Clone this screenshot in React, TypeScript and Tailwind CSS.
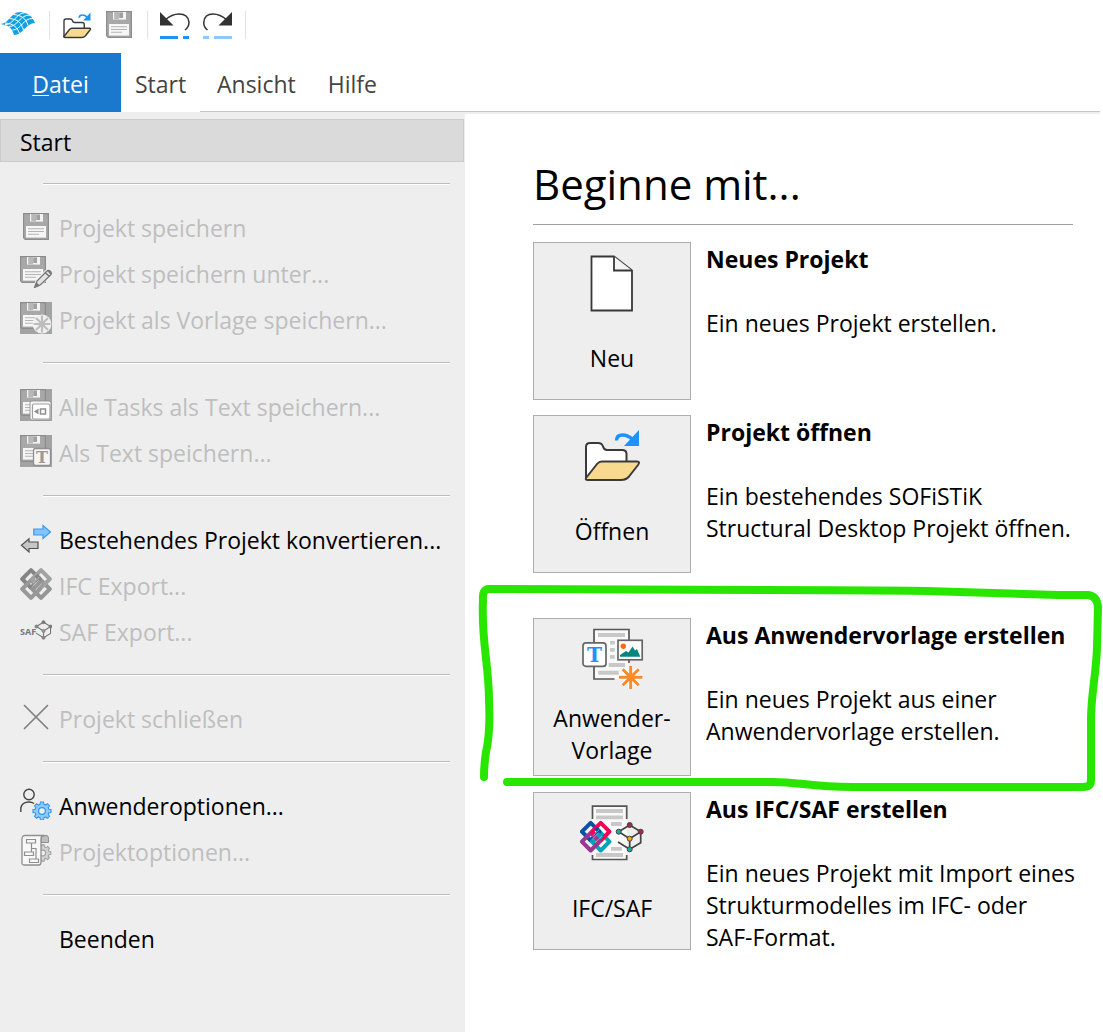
import { Fragment, type ReactNode } from 'react';

type IconProps = { children: ReactNode; viewBox?: string; className?: string };

function Icon({ children, viewBox = '0 0 32 32', className = 'size-8' }: IconProps) {
  return (
    <svg viewBox={viewBox} className={`shrink-0 ${className}`} fill="none" aria-hidden="true">
      {children}
    </svg>
  );
}

function Floppy() {
  return (
    <g>
      <path d="M.6 .6H25.4V26.4H2.2L.6 24.8Z" fill="#a8a8a8" stroke="#8c8c8c" strokeWidth="1.2" />
      <path d="M7 1H20V8.6H7Z" fill="#f4f4f4" />
      <path d="M8.2 1H13V8.4H8.2Z" fill="#b8b8b8" />
      <path d="M13.2 1.4H17V7H13.2Z" fill="#a0a0a0" />
      <path d="M3 13H23V24.6H3Z" fill="#f6f6f6" />
      <path d="M5 15.7H21M5 18.5H21M5 21.3H16" stroke="#b4b4b4" strokeWidth="1.1" />
    </g>
  );
}

function FloppyIcon() {
  return (
    <Icon>
      <g transform="translate(3 3)"><Floppy /></g>
    </Icon>
  );
}

function SaveAsIcon() {
  return (
    <Icon>
      <Floppy />
      <path d="M14.5 31 16.5 24.5 26 15Q28.500 12.500 31 15Q33 17.500 30 20L21 28.500Z" fill="#eee" stroke="#eee" strokeWidth="2" />
      <path d="M15 31 17 25 26.500 15.500Q28.500 13.500 30.500 15.500Q32.500 17.500 29.800 19.800L20.500 28.800Z" fill="#e4e4e4" stroke="#777" strokeWidth="1.300" />
      <path d="M25 16.500 29.500 20.500M28 14.500 31 18M15 31 16.500 27.500 18.500 29.500Z" fill="#777" stroke="#777" strokeWidth="1.600" />
    </Icon>
  );
}

function SaveTemplateIcon() {
  return (
    <Icon>
      <path d="M0 0H32V32H0Z" fill="#a3a3a3" />
      <Floppy />
      <circle cx="22" cy="22" r="9.400" fill="#f1f1f1" />
      <path d="M22 13.500V30.500M13.500 22H30.500M16 16 28 28M28 16 16 28" stroke="#bdbdbd" strokeWidth="2.200" />
    </Icon>
  );
}

function SaveTasksIcon() {
  return (
    <Icon>
      <path d="M0 0H32V32H0Z" fill="#a3a3a3" />
      <Floppy />
      <rect x="10" y="12" width="21" height="19" rx="2" fill="#f5f5f5" stroke="#8c8c8c" strokeWidth="0.800" />
      <rect x="12.500" y="15" width="17.500" height="15" rx="1.500" fill="#fff" stroke="#a0a0a0" strokeWidth="1.200" />
      <path d="M14 22.500 18.500 19.500V25.500Z" fill="#909090" />
      <rect x="20.500" y="20" width="5" height="5" stroke="#909090" strokeWidth="1.500" />
    </Icon>
  );
}

function SaveTextIcon() {
  return (
    <Icon>
      <path d="M0 0H32V32H0Z" fill="#a3a3a3" />
      <Floppy />
      <rect x="13.500" y="13.500" width="17" height="17" rx="2" fill="#f5f5f5" stroke="#909090" strokeWidth="1.300" />
      <text x="22" y="28" textAnchor="middle" fontSize="16" fontWeight="700" fontFamily="DejaVu Serif, serif" fill="#9a9a9a">T</text>
    </Icon>
  );
}

function ConvertIcon() {
  return (
    <Icon>
      <path d="M13.800 7H23V3.500L30.500 10 23 16.500V13H13.800Z" fill="#83c4fb" stroke="#3898ee" strokeWidth="1.200" />
      <path d="M18 20H9V16.700L1.400 23.300 9 30V26.500H18Z" fill="#c6c6c6" stroke="#505050" strokeWidth="1.200" />
    </Icon>
  );
}

type IfcColors = { a: string; b: string; c: string; d: string };

function IfcMark({ a, b, c, d }: IfcColors) {
  return (
    <g strokeWidth="4" strokeLinejoin="round">
      <path d="M10.700 20.900 19.500 29.700 10.700 38.500 1.900 29.700Z" stroke={a} />
      <path d="M20.700 30.900 29.500 39.700 20.700 48.500 11.900 39.700Z" stroke={d} />
      <path d="M10.700 30.900 19.500 39.700 10.700 48.500 1.900 39.700Z" stroke={c} />
      <path d="M20.700 20.900 29.500 29.700 20.700 38.500 11.900 29.700Z" stroke={b} />
      <path d="M15.700 25.900 19.500 29.700 12.500 36.700" stroke={a} />
      <path d="M12.500 40.500 18.700 32.900 22 36.200" stroke={d} />
      <path d="M13.200 33.400 19.500 39.700 15.700 43.500" stroke={c} />
      <path d="M13 33.800 19.200 27.600M12.200 37.200 18.400 31M15.400 40.400 21.800 34" stroke="#fff" strokeWidth="0.600" opacity="0.700" />
    </g>
  );
}

function GraphMark({ colors, line }: { colors: string[]; line: string }) {
  return (
    <g>
      <path d="M38.700 29.700 49.700 23 60.700 29.700 49.700 36.700ZM49.700 36.700V47.300L60.700 40.700V29.700M49.700 47.300 38 40" stroke={line} strokeWidth="1.700" />
      <circle cx="49.700" cy="23" r="2.500" fill={colors[0]} stroke={line} />
      <circle cx="60.700" cy="29.700" r="2.500" fill={colors[0]} stroke={line} />
      <circle cx="38.700" cy="29.700" r="2.500" fill={colors[1]} stroke={line} />
      <circle cx="49.700" cy="47.300" r="2.500" fill={colors[1]} stroke={line} />
      <circle cx="49.700" cy="36.700" r="2.500" fill={colors[2]} stroke={line} />
    </g>
  );
}

function IfcExportIcon() {
  return (
    <Icon viewBox="-0.300 18.700 32 32">
      <IfcMark a="#858585" b="#a2a2a2" c="#999" d="#959595" />
    </Icon>
  );
}

function SafExportIcon() {
  return (
    <Icon>
      <text x="0" y="21" fontSize="9" fontWeight="700" fontFamily="Open Sans, sans-serif" fill="#777">SAF</text>
      <g transform="translate(-8.300 -6.500) scale(.64)">
        <GraphMark colors={['#777', '#888', '#999']} line="#777" />
      </g>
    </Icon>
  );
}

function CloseIcon() {
  return (
    <Icon>
      <path d="M4.500 4.500 27.500 27.500M27.500 4.500 4.500 27.500" stroke="#808080" strokeWidth="1.700" strokeLinecap="round" />
    </Icon>
  );
}

const gearPath =
  'M-1.500-9H1.500L2-6.700 3.700-6 5.500-7.300 7.500-5.300 6.200-3.500 6.900-1.800 9-1.500V1.500L6.900 1.800 6.200 3.500 7.500 5.300 5.500 7.300 3.700 6 2 6.700 1.500 9H-1.500L-2 6.700-3.700 6-5.500 7.300-7.500 5.300-6.200 3.500-6.900 1.800-9 1.500V-1.500L-6.900-1.800-6.200-3.500-7.500-5.300-5.500-7.300-3.700-6-2-6.700Z';

function UserOptionsIcon() {
  return (
    <Icon>
      <circle cx="9" cy="6.500" r="5.200" stroke="#444" strokeWidth="1.400" />
      <path d="M.8 24V20Q2 14 9 14Q12 14 14 15.500" stroke="#444" strokeWidth="1.400" />
      <g transform="translate(22 23)">
        <path d={gearPath} fill="#8ccaff" stroke="#2f96f3" strokeWidth="1.100" />
        <circle r="3.400" fill="#eee" stroke="#2f96f3" strokeWidth="1.200" />
      </g>
    </Icon>
  );
}

function ProjectOptionsIcon() {
  return (
    <Icon>
      <g transform="translate(22.700 19) scale(.9)">
        <path d={gearPath} fill="#d0d0d0" stroke="#a0a0a0" strokeWidth="1.200" />
        <circle r="3.200" fill="#eee" stroke="#a0a0a0" strokeWidth="1.200" />
      </g>
      <path d="M21 9V3.500Q21 1.500 23.500 1.500H27Q29 2 28.500 8.500H21Z" fill="#bdbdbd" stroke="#8f8f8f" />
      <path d="M24.500 1.500H5Q2 1.500 2 5V28Q1.500 31 4 31H19Q21 31 21 28V4Q21 2 24.500 1.500Z" fill="#f8f8f8" stroke="#8f8f8f" strokeWidth="1.300" />
      <path d="M6.500 5.500H15.500V9H6.500ZM4.500 18H13.500V21.500H4.500ZM9.500 25H18.500V28.500H9.500ZM11.500 9V18M11.500 14.500H16V25" stroke="#8f8f8f" strokeWidth="1.200" />
    </Icon>
  );
}

function FolderIcon({ className, stroke }: { className: string; stroke: number }) {
  return (
    <Icon viewBox="0 0 58 56" className={className}>
      <path d="M3 50V18Q3 14 7 14H15Q19 14 20 17.500Q21 21 24 21H39Q43.500 21 43.500 25V34" fill="#fff" stroke="#3a3a3a" strokeWidth={stroke} />
      <path d="M3 49 14 35Q16 32.500 19 32.500H54Q57.500 32.500 55 36L46 47.500Q43 51 38 51H5Q2 51 3 49Z" fill="#f7da8e" stroke="#3a3a3a" strokeWidth={stroke} strokeLinejoin="round" />
      <path d="M33.500 11.500Q33.500 6 39.500 6Q45 6 49 10" stroke="#1e92fa" strokeWidth="3.400" />
      <path d="M56 1V17H41Z" fill="#1e92fa" />
    </Icon>
  );
}

function NewIcon() {
  return (
    <Icon viewBox="0 0 64 64" className="size-16">
      <path d="M11.500 4.500H34L52 18.500V58.500H11.500Z" fill="#fff" stroke="#383838" strokeWidth="1.800" />
      <path d="M34 4.500V18.500H52" fill="#f4f4f4" stroke="#383838" strokeWidth="1.800" />
    </Icon>
  );
}

function TemplateIcon() {
  return (
    <Icon viewBox="0 0 64 64" className="size-16">
      <path d="M14 1.500H49V51H14Z" fill="#f9f9f9" />
      <path d="M34.500 51H14V1.500H49V35" stroke="#555" strokeWidth="1.700" />
      <path d="M18 5H45V9H18ZM30 13H34.700V16.400H30ZM30 20H34.700V23.700H30ZM30 27H34.700V30.700H30ZM28.700 35H45V39H28.700ZM18.300 42.700H38.700V46.700H18.300Z" fill="#c8c8c8" />
      <rect x="3" y="14.800" width="23" height="23.600" rx="3" fill="#fff" stroke="#666" strokeWidth="1.700" />
      <text x="14.500" y="34" textAnchor="middle" fontSize="20" fontWeight="700" fontFamily="DejaVu Serif, serif" fill="#1e92fa">T</text>
      <rect x="38" y="12.300" width="24.200" height="19.500" fill="#fff" stroke="#666" strokeWidth="1.700" />
      <circle cx="43.300" cy="18.300" r="2.700" fill="#ff6a0c" />
      <path d="M40 28.700V27L46 23 48.500 24.500 52.500 18.500 55 22.500 57 21 60.300 28.700Z" fill="#078680" />
      <path d="M50.700 38V61M39 49.300H62.400M42.700 41.300 58.700 57.300M58.700 41.300 42.700 57.300" stroke="#fff" strokeWidth="5" />
      <path d="M50.700 38V61M39 49.300H62.400M42.700 41.300 58.700 57.300M58.700 41.300 42.700 57.300" stroke="#f98b2b" strokeWidth="3" />
    </Icon>
  );
}

function IfcSafIcon() {
  return (
    <Icon viewBox="0 0 64 64" className="size-16">
      <path d="M12.500 4H46.700V57.700H12.500Z" fill="#f9f9f9" />
      <path d="M12.500 17V4.200H46.700V17M12.500 53V57.500H46.700V53" stroke="#555" strokeWidth="1.700" />
      <path d="M16 7H43V11H16ZM16 13.500H43V17.300H16ZM31 20H41.700V24H31ZM31 45H41.700V48.800H31ZM16 51H43V55H16Z" fill="#c8c8c8" />
      <IfcMark a="#0553a4" b="#ee0754" c="#9c3491" d="#06a3b9" />
      <GraphMark colors={['#a72b40', '#18a9a5', '#f6a01d']} line="#444" />
    </Icon>
  );
}

function LogoIcon() {
  return (
    <Icon viewBox="0 0 36 26" className="h-[26px] w-9">
      <path d="M0 13C9 13 11 1 20 1C29 2 32 5 35 12C26 12 23 24 14 24C12 17 9 14 0 13Z" fill="#149fe0" />
      <path
        d="M5 13.700C14 13.700 16 1.700 25 1.700M9 15.500C18 15.500 20 3.500 30 4M12.500 19C21 19 23 7 33 7.500M5 12C14 13 17 16 19.500 22.500M9.500 7.500C18 8.500 21 11.500 23.500 19M13.500 3.500C22 4.500 26 7.500 28 14.500"
        stroke="#fff"
        strokeWidth="1"
      />
    </Icon>
  );
}

function UndoIcon() {
  return (
    <Icon viewBox="0 0 30 28" className="h-7 w-[30px]">
      <path d="M0 0V13.500H13.500Z" fill="#333" />
      <path d="M5 8Q12 2 19 2Q28 2 29 10Q29 15 25 18" stroke="#333" strokeWidth="1.500" />
      <path d="M0 24H18V27H0ZM23 24H29V27H23Z" fill="#1e92f4" />
    </Icon>
  );
}

function RedoIcon() {
  return (
    <Icon viewBox="0 0 30 28" className="h-7 w-[30px]">
      <path d="M29 0V13.500H15.500Z" fill="#333" />
      <path d="M24 8Q17 2 10 2Q1.500 2 .8 10Q.5 15 4.500 18" stroke="#333" strokeWidth="1.500" />
      <path d="M0 24H6V27H0ZM11 24H29V27H11Z" fill="#8cc8fb" />
    </Icon>
  );
}

type MenuItem = { label: string; icon?: ReactNode; enabled?: boolean };

const menuGroups: MenuItem[][] = [
  [
    { label: 'Projekt speichern', icon: <FloppyIcon /> },
    { label: 'Projekt speichern unter...', icon: <SaveAsIcon /> },
    { label: 'Projekt als Vorlage speichern...', icon: <SaveTemplateIcon /> },
  ],
  [
    { label: 'Alle Tasks als Text speichern...', icon: <SaveTasksIcon /> },
    { label: 'Als Text speichern...', icon: <SaveTextIcon /> },
  ],
  [
    { label: 'Bestehendes Projekt konvertieren...', icon: <ConvertIcon />, enabled: true },
    { label: 'IFC Export...', icon: <IfcExportIcon /> },
    { label: 'SAF Export...', icon: <SafExportIcon /> },
  ],
  [{ label: 'Projekt schließen', icon: <CloseIcon /> }],
  [
    { label: 'Anwenderoptionen...', icon: <UserOptionsIcon />, enabled: true },
    { label: 'Projektoptionen...', icon: <ProjectOptionsIcon /> },
  ],
  [{ label: 'Beenden', enabled: true }],
];

function Divider() {
  return <span className="h-7 w-px bg-[#e2e2e2]" />;
}

function Toolbar() {
  return (
    <div className="flex h-[53px] items-start pt-[11px]">
      <LogoIcon />
      <div className="ml-[13px] flex">
        <Divider />
        <button aria-label="Öffnen" className="ml-3"><FolderIcon className="h-7 w-[30px]" stroke={2.8} /></button>
        <button aria-label="Speichern" className="-mt-[3px] ml-[11px] h-8 w-8"><FloppyIcon /></button>
        <span className="ml-3 flex"><Divider /></span>
        <button aria-label="Rückgängig" className="ml-3"><UndoIcon /></button>
        <button aria-label="Wiederholen" className="ml-[13px]"><RedoIcon /></button>
        <span className="ml-3 flex"><Divider /></span>
      </div>
    </div>
  );
}

function Tabs() {
  return (
    <nav className="mr-[3px] flex h-[59px] text-[#444]">
      <button className="w-[121px] bg-[#1a79cc] pt-[3px] text-white"><span className="underline decoration-1 underline-offset-2">D</span>atei</button>
      <button className="w-[79px] pt-[3px]">Start</button>
      <div className="flex flex-1 gap-8 border-b border-[#c6c6c6] pt-1 pl-[17px]">
        <button>Ansicht</button>
        <button>Hilfe</button>
      </div>
    </nav>
  );
}

function Sidebar() {
  return (
    <aside className="w-[465px] shrink-0 bg-[#eee] pt-[7px]">
      <button className="block h-[43px] w-[464px] border border-[#cbcbcb] bg-[#dadada] pt-[2px] pl-[19px] text-left text-black">Start</button>
      {menuGroups.map((group, index) => (
        <Fragment key={index}>
          <hr className="mt-[21px] mr-[15px] mb-[18px] ml-[43px] h-[2px] border-t border-b border-t-[#bcbcbc] border-b-white" />
          {group.map((item) => (
            <button
              key={item.label}
              disabled={!item.enabled}
              className="flex h-[46px] w-full items-center gap-[7px] pl-5 text-black disabled:text-[#bebebe]"
            >
              {item.icon ?? <span className="w-8" />}
              <span className="pt-1 whitespace-nowrap">{item.label}</span>
            </button>
          ))}
        </Fragment>
      ))}
    </aside>
  );
}

type StartCardProps = { icon: ReactNode; caption: string; title: string; text: ReactNode; children?: ReactNode };

function StartCard({ icon, caption, title, text, children }: StartCardProps) {
  return (
    <section className="relative flex gap-[15px]">
      <button className="flex h-[158px] w-[158px] shrink-0 flex-col items-center border border-[#adadad] bg-[#eee] pt-[9px] leading-8">
        {icon}
        <span className="mt-[10px] flex h-16 w-[130px] items-center justify-center">{caption}</span>
      </button>
      <div className="min-w-0 pt-px leading-8">
        <h2 className="font-bold whitespace-nowrap">{title}</h2>
        <p className="mt-8">{text}</p>
      </div>
      {children}
    </section>
  );
}

function MarkerOutline() {
  return (
    <svg
      viewBox="478 583 625 210"
      className="pointer-events-none absolute -top-[35px] -left-[55px] h-[210px] w-[625px] max-w-none"
      fill="none"
      stroke="#28e600"
      strokeWidth="8"
      strokeLinecap="round"
      strokeLinejoin="round"
      aria-hidden="true"
    >
      <path d="M484 777Q484 765 486 752C490 735 490 720 489 700C489 665 481 640 483 600Q482 589 489 589L760 590Q860 590 926 591L1058 595H1088Q1097 596 1098 607L1097 648C1096 675 1091 695 1091 720L1091 780Q1091 787 1083 787H853C810 787 800 782 773 782H507" />
    </svg>
  );
}

export default function App() {
  return (
    <div className="flex min-h-screen flex-col bg-white font-['Open_Sans',sans-serif] text-[23px] leading-8 text-black">
      <Toolbar />
      <Tabs />
      <div className="flex flex-1">
        <Sidebar />
        <main className="mr-[3px] min-w-0 flex-1 border-t-2 border-[#eee] pt-[42px] pr-[27px] pl-[68px]">
          <h1 className="border-b border-[#a0a0a0] pb-3 text-[42px] leading-[56px]">Beginne mit...</h1>
          <div className="-mr-1 flex flex-col gap-[15px] pt-[17px]">
            <StartCard icon={<NewIcon />} caption="Neu" title="Neues Projekt" text="Ein neues Projekt erstellen." />
            <StartCard
              icon={<span className="flex h-16 items-center"><FolderIcon className="h-14 w-[58px]" stroke={2} /></span>}
              caption="Öffnen"
              title="Projekt öffnen"
              text="Ein bestehendes SOFiSTiK Structural Desktop Projekt öffnen."
            />
            <div className="mt-[30px] mb-px">
              <StartCard icon={<TemplateIcon />} caption="Anwender-Vorlage" title="Aus Anwendervorlage erstellen" text="Ein neues Projekt aus einer Anwendervorlage erstellen.">
                <MarkerOutline />
              </StartCard>
            </div>
            <StartCard
              icon={<IfcSafIcon />}
              caption="IFC/SAF"
              title="Aus IFC/SAF erstellen"
              text={<>Ein neues Projekt mit Import eines Strukturmodelles im IFC- oder <span className="whitespace-nowrap">SAF-Format.</span></>}
            />
          </div>
        </main>
      </div>
    </div>
  );
}
